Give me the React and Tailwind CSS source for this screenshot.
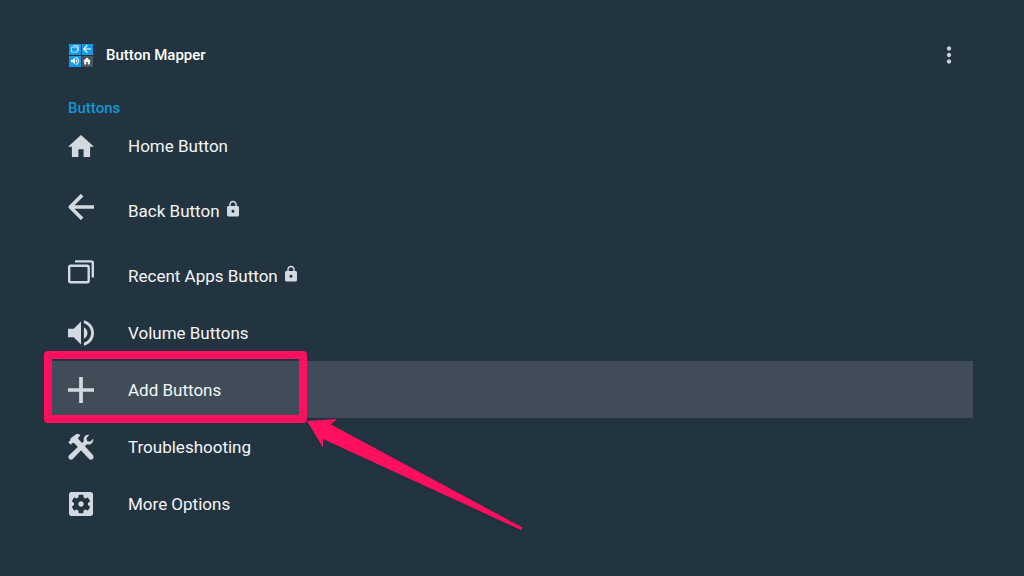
import React, { useState } from 'react';
import { MdSettingsApplications, MdVolumeUp, MdMoreVert, MdLock } from 'react-icons/md';

const HomeIcon = ({ className }) => (
  <svg viewBox="2 1.5 20 20" className={className} fill="currentColor" aria-hidden="true">
    <path d="M10 20v-6h4v6h5v-8h3L12 3 2 12h3v8z" />
  </svg>
);

const BackIcon = ({ className }) => (
  <svg viewBox="4 4 16 16" className={className} fill="none" stroke="currentColor" strokeWidth="2.2" strokeLinejoin="round" aria-hidden="true">
    <path d="M20 12H5.500M12.700 4.700L5.400 12l7.300 7.300" />
  </svg>
);

const RecentIcon = ({ className }) => (
  <svg viewBox="0 0 26 26" className={className} fill="none" stroke="currentColor" strokeWidth="2.4" aria-hidden="true">
    <rect x="1.200" y="6.800" width="19.500" height="16.500" rx="1.500" />
    <path d="M7 2.400h16.300a1.500 1.500 0 0 1 1.500 1.500V18.500" />
  </svg>
);

const VolumeIcon = ({ className }) => (
  <svg viewBox="3 3 18 18" className={className} fill="currentColor" aria-hidden="true">
    <path d="M3 9v6h4l5 5V4L7 9H3zm13.5 3c0-1.77-1.02-3.29-2.5-4.03v8.05c1.48-.73 2.5-2.25 2.5-4.02zM14 3.23v2.06c2.89.86 5 3.54 5 6.71s-2.11 5.85-5 6.71v2.06c4.01-.91 7-4.49 7-8.77s-2.99-7.86-7-8.77z" />
  </svg>
);

const PlusIcon = ({ className }) => (
  <svg viewBox="5 5 14 14" className={className} fill="currentColor" aria-hidden="true">
    <path d="M19 13h-6v6h-2v-6H5v-2h6V5h2v6h6z" />
  </svg>
);

const ToolsIcon = ({ className }) => (
  <svg viewBox="0 0 26 26" className={className} fill="currentColor" aria-hidden="true">
    <path d="M5 2.500L8.500 0c1.500-.3 2.900.2 3.900 1.200L9.800 4.200l1.900 2.300 13.200 14.500c1 1.200.9 2.900-.1 3.900s-2.800 1-3.900-.1L7.500 10.500 5.800 8.800l-1.600.4-1.400 1.600L.3 8.200l2-1.900.3-2z" />
    <path d="M21.500 .8c-2.700-.4-5 .8-5.700 3.200-.3 1-.2 2.200.1 3.200L1.300 21c-1.200 1-1.200 2.800-.1 3.900s2.800 1 3.900-.1L18.800 10.300c1 .4 2 .4 3 .1 2.500-.7 3.800-3.100 3.400-5.700l-3.100 3-3-.8-.7-3z" />
  </svg>
);

const entries = [
  { id: 'home', label: 'Home Button', icon: HomeIcon },
  { id: 'back', label: 'Back Button', icon: BackIcon, locked: true },
  { id: 'recent', label: 'Recent Apps Button', icon: RecentIcon, locked: true },
  { id: 'volume', label: 'Volume Buttons', icon: VolumeIcon },
  { id: 'add', label: 'Add Buttons', icon: PlusIcon },
  { id: 'trouble', label: 'Troubleshooting', icon: ToolsIcon },
  { id: 'more', label: 'More Options', icon: MdSettingsApplications, iconSize: 'w-8 h-8' },
];

function AppLogo() {
  return (
    <span className="grid grid-cols-2 gap-px w-6 text-white" aria-hidden="true">
      <span className="flex h-[11px] items-center justify-center bg-[#109ce8]">
        <RecentIcon className="w-2 h-2" />
      </span>
      <span className="flex h-[11px] items-center justify-center bg-[#109ce8]">
        <BackIcon className="w-2 h-2" />
      </span>
      <span className="flex h-[11px] items-center justify-center bg-[#109ce8]">
        <VolumeIcon className="w-2 h-2" />
      </span>
      <span className="flex h-[11px] items-center justify-center bg-[#4a5560]">
        <HomeIcon className="w-2 h-2" />
      </span>
    </span>
  );
}

// Pink frame and arrow pointing at the highlighted entry
function Callout() {
  return (
    <>
      <span className="pointer-events-none absolute -left-[7px] -top-2.5 h-[72px] w-[263px] rounded-sm border-8 border-[#ff105f]" />
      <svg
        viewBox="0 0 218 112"
        className="pointer-events-none absolute left-[255px] top-[60px] h-28 w-[218px] overflow-visible drop-shadow-sm"
        aria-hidden="true"
      >
        <path fill="#ff105f" d="M1 0L31 -2 25 3.500 216.500 106.500 215 109 17 18V26.500Z" />
      </svg>
    </>
  );
}

function Entry({ entry, selected, onSelect }) {
  const Icon = entry.icon;
  return (
    <li className="relative">
      <button
        type="button"
        onClick={() => onSelect(entry.id)}
        className={`flex w-full items-center text-left ${entry.locked ? 'h-[65px]' : 'h-[57px]'} ${selected ? 'bg-[#404d59]' : ''}`}
      >
        <span className="flex w-[60px] shrink-0 justify-center text-[#d3d9e0]">
          <Icon className={entry.iconSize || 'w-[26px] h-[26px]'} />
        </span>
        <span className={`ml-[17px] flex items-center gap-1 text-[17px] leading-6 text-[#f4f6f8] ${entry.locked ? 'pt-2' : ''}`}>
          {entry.label}
          {entry.locked && <MdLock className="mb-1 h-[18px] w-[18px] text-[#d3d9e0]" aria-label="Locked" />}
        </span>
      </button>
      {entry.id === 'add' && <Callout />}
    </li>
  );
}

export default function App() {
  const [selected, setSelected] = useState('add');

  return (
    <main className="min-h-screen overflow-hidden bg-[#233441] px-[51px] pt-[38px] font-['Roboto',sans-serif]">
      {/* Header */}
      <header className="flex h-[34px] items-center pl-[18px] pr-[11px]">
        <AppLogo />
        <h1 className="ml-[13px] text-[15px] font-medium text-white">Button Mapper</h1>
        <button type="button" aria-label="More options" className="ml-auto text-[#c5d0da]">
          <MdMoreVert className="h-[26px] w-[26px]" />
        </button>
      </header>

      {/* Button list */}
      <h2 className="mt-[27px] pl-[17px] text-[15px] leading-[18px] font-medium text-[#1595d6]">Buttons</h2>
      <ul>
        {entries.map((entry) => (
          <Entry key={entry.id} entry={entry} selected={selected === entry.id} onSelect={setSelected} />
        ))}
      </ul>
    </main>
  );
}
